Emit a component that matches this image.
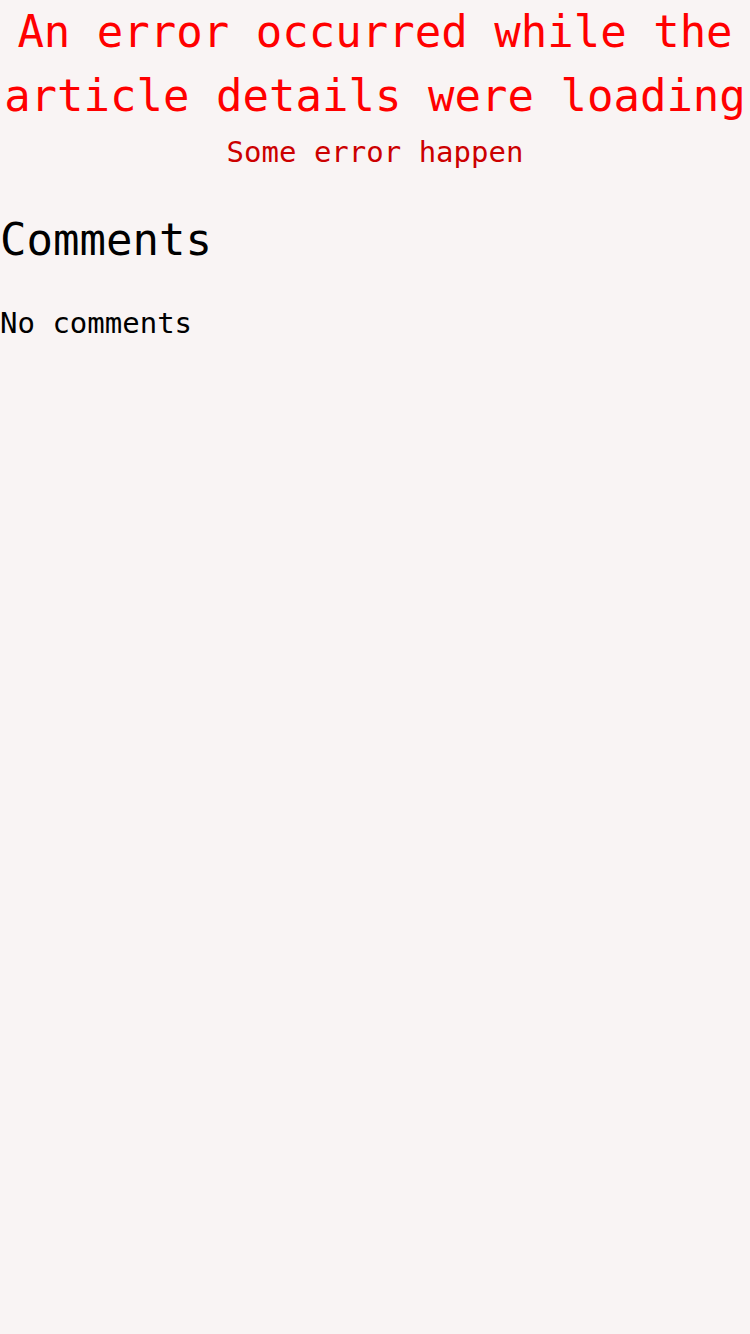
export default function App() {
  return (
    <div
      className="min-h-screen bg-[#f9f4f4] text-black"
      style={{ fontFamily: '"DejaVu Sans Mono", "Liberation Mono", monospace' }}
    >
      <div className="text-center">
        <h1 className="text-[44px] leading-[64px] font-normal text-[#ff0000]">
          An error occurred while the article details were loading
        </h1>
        <p className="mt-[7px] text-[29px] leading-[34px] text-[#cc0000]">Some error happen</p>
      </div>

      <section>
        <h2 className="mt-[45px] text-[44px] leading-[52px] font-normal">Comments</h2>
        <p className="mt-[40px] text-[29px] leading-[34px]">No comments</p>
      </section>
    </div>
  );
}
